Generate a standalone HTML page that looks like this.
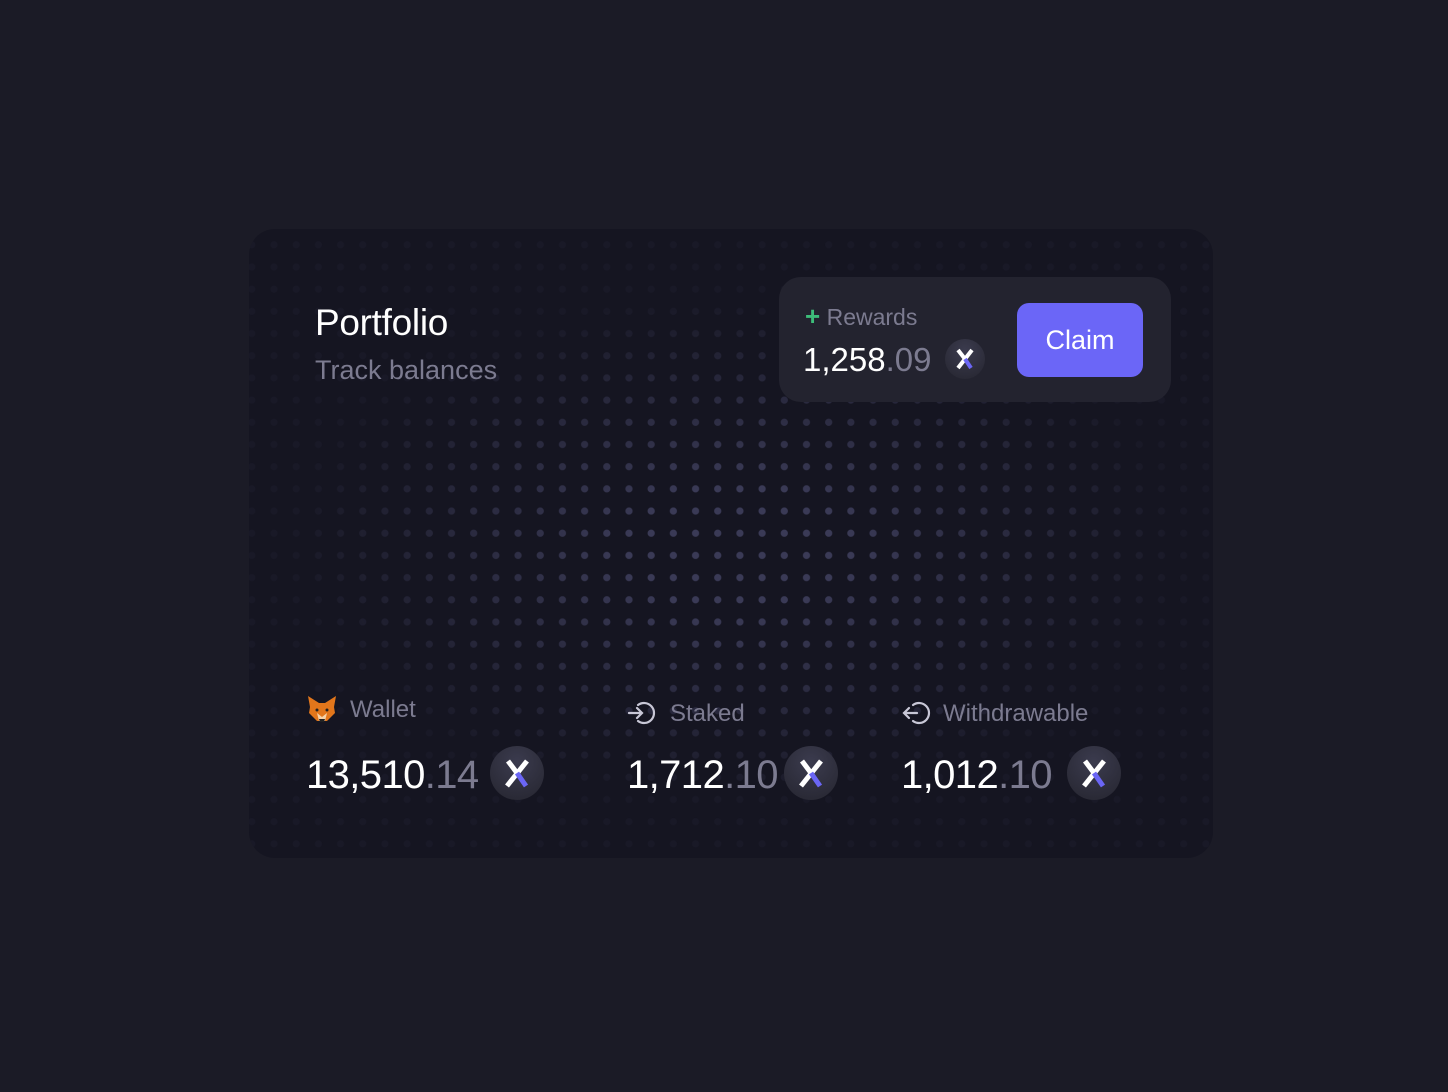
<!DOCTYPE html>
<html><head><style>
body{margin:0;width:1448px;height:1092px;background:#1b1b26;font-family:"Liberation Sans",sans-serif;position:relative;overflow:hidden}
.card{position:absolute;left:249px;top:229px;width:964px;height:629px;border-radius:26px;background:#151521;overflow:hidden}
.dots{position:absolute;inset:0;background-image:radial-gradient(circle,#3a3a56 3.3px,transparent 3.9px);background-size:22.2px 22.2px;background-position:-8.3px 4.7px;-webkit-mask-image:radial-gradient(ellipse 440px 250px at 490px 320px,#000 25%,rgba(0,0,0,.12) 100%);mask-image:radial-gradient(ellipse 440px 250px at 490px 320px,#000 25%,rgba(0,0,0,.12) 100%)}
.abs{position:absolute}
.w{color:#fff}.g{color:#7c7b90}
.num{font-size:40px;letter-spacing:-0.6px}
.x{position:absolute;border-radius:50%;background:radial-gradient(circle at 50% 30%,#3b3b4e,#25252f)}
.x svg{position:absolute;left:0;top:0}
</style></head><body>
<div class="card"><div class="dots"></div>
<div class="abs w" style="left:66px;top:73px;font-size:37px;letter-spacing:-0.3px">Portfolio</div>
<div class="abs g" style="left:66px;top:126px;font-size:27px">Track balances</div>
<div class="abs" style="left:530px;top:48px;width:392px;height:125px;border-radius:22px;background:#23232f"></div>
<div class="abs" style="left:556px;top:72px;font-size:23px;color:#7c7b90"><span style="color:#3dbd7a;font-size:26px;font-weight:bold">+</span> Rewards</div>
<div class="abs" style="left:554px;top:112px;font-size:33px"><span class="w">1,258</span><span class="g">.09</span></div>
<div class="x" style="left:696px;top:110px;width:40px;height:40px"><svg width="40" height="40"><path d="M13 29 L27 11" stroke="#fff" stroke-width="4"/><path d="M13 11 L20 20" stroke="#fff" stroke-width="4"/><path d="M20 20 L26 29" stroke="#6b66f5" stroke-width="4"/></svg></div>
<div class="abs" style="left:768px;top:74px;width:126px;height:74px;border-radius:12px;background:#6b66f7;color:#fff;font-size:27px;line-height:74px;text-align:center">Claim</div>

<svg class="abs" style="left:58px;top:466px" width="30" height="28"><path d="M1 1 L12 8 L18 8 L29 1 L27 12 L28 18 L20 26 L10 26 L2 18 L3 12 Z" fill="#e2761b"/><path d="M10 18 L15 22 L20 18 L18 26 L12 26Z" fill="#f5d1a8"/><path d="M12 24 L18 24 L17 27 L13 27Z" fill="#222"/><circle cx="10" cy="15" r="1.5" fill="#222"/><circle cx="20" cy="15" r="1.5" fill="#222"/></svg>
<div class="abs g" style="left:101px;top:467px;font-size:24px">Wallet</div>
<div class="abs num" style="left:57px;top:524px"><span class="w">13,510</span><span class="g">.14</span></div>
<div class="x" style="left:241px;top:517px;width:54px;height:54px"><svg width="54" height="54"><path d="M17 40 L37 15" stroke="#fff" stroke-width="5"/><path d="M18 15 L27 27" stroke="#fff" stroke-width="5"/><path d="M27 27 L36 40" stroke="#6b66f5" stroke-width="5"/></svg></div>

<svg class="abs" style="left:378px;top:471px" width="32" height="26" fill="none" stroke="#c8c7d6" stroke-width="2.2" stroke-linecap="round"><path d="M2 13 H15 M10 8 L15 13 L10 18"/><path d="M11 5 A10 10 0 1 1 11 21"/></svg>
<div class="abs g" style="left:421px;top:471px;font-size:24px">Staked</div>
<div class="abs num" style="left:378px;top:524px"><span class="w">1,712</span><span class="g">.10</span></div>
<div class="x" style="left:535px;top:517px;width:54px;height:54px"><svg width="54" height="54"><path d="M17 40 L37 15" stroke="#fff" stroke-width="5"/><path d="M18 15 L27 27" stroke="#fff" stroke-width="5"/><path d="M27 27 L36 40" stroke="#6b66f5" stroke-width="5"/></svg></div>

<svg class="abs" style="left:652px;top:471px" width="32" height="26" fill="none" stroke="#c8c7d6" stroke-width="2.2" stroke-linecap="round"><path d="M16 13 H3 M8 8 L3 13 L8 18"/><path d="M12 5 A10 10 0 1 1 12 21"/></svg>
<div class="abs g" style="left:694px;top:471px;font-size:24px">Withdrawable</div>
<div class="abs num" style="left:652px;top:524px"><span class="w">1,012</span><span class="g">.10</span></div>
<div class="x" style="left:818px;top:517px;width:54px;height:54px"><svg width="54" height="54"><path d="M17 40 L37 15" stroke="#fff" stroke-width="5"/><path d="M18 15 L27 27" stroke="#fff" stroke-width="5"/><path d="M27 27 L36 40" stroke="#6b66f5" stroke-width="5"/></svg></div>
</div>
</body></html>
